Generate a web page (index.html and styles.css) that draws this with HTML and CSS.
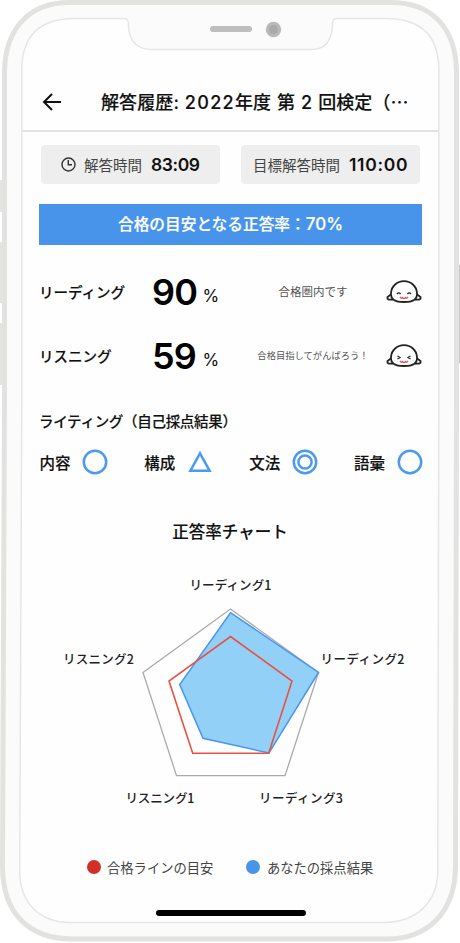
FILE: index.html
```html
<!DOCTYPE html>
<html lang="ja">
<head>
<meta charset="utf-8">
<title>解答履歴</title>
<link rel="stylesheet" href="styles.css">
</head>
<body>
<main class="phone">
  <svg class="frame" viewBox="0 0 460 943" aria-hidden="true">
    <path class="button" d="M0 180H5V212H0ZM0 242H5V303H0ZM0 323H5V385H0Z"/>
    <path class="button-right" d="M456 265H460V363H456Z"/>
    <path class="shell" d="M69 2.5H391C431 2.5 456 27 456.500 72V400L455.500 867C455 913 427 939 387 939H73C29 939 3 914 2.500 867L4.500 400V72C5 27 31 2.500 69 2.500Z"/>
    <path class="screen-edge" d="M74 18.500H124Q128 18.500 128.500 23V28Q131 49.500 152 49.500H311Q331 49.500 332.500 26V23Q333 18.500 337 18.500H386Q438 19 438.800 68V400L437.800 871C437.500 902 417 922.500 383 922.500H70C39 922.500 20 902 19.700 872L21.800 400V68Q23 19 74 18.500Z"/>
    <rect x="210" y="26" width="42" height="6" rx="3" fill="#bebebe"/>
    <circle cx="273.500" cy="29.500" r="7.700" fill="#b9b9b9"/>
    <circle cx="273.500" cy="29.500" r="4.500" fill="#aaa"/>
  </svg>
  <div class="app">
    <header class="header">
      <svg class="back" viewBox="0 0 20 20"><path d="M10 2L2 10L10 18M2 10H19"/></svg>
      <h1 class="title">解答履歴: <span class="title-year">2022</span>年度 第 2 回検定（<span class="dots">⋯</span></h1>
    </header>
    <section class="times">
      <div class="time"><svg class="clock" viewBox="0 0 15 15"><circle cx="7.500" cy="7.500" r="6.500"/><path d="M7.300 3V7.800H11"/></svg><span class="time-label">解答時間</span><b class="time-value">83:09</b></div>
      <div class="time time-goal"><span class="time-label">目標解答時間</span><b class="time-value time-value-goal">110:00</b></div>
    </section>
    <div class="banner"><span>合格の目安となる正答率：<span class="banner-rate">70%</span></span></div>
    <section class="scores">
      <div class="score"><span class="skill">リーディング</span><span class="number">90</span><span class="percent">%</span><span class="comment">合格圏内です</span>
        <svg class="face" viewBox="0 0 36 24"><path class="body" d="M5.500 14L1.500 17Q0.500 20.500 7 19.500M30.500 14L34.500 17Q35.500 20.500 29 19.500"/><path class="body" d="M5 13C5.500 6 11 1.200 18 1.200S30.500 6 31 13C31.500 19.500 27 22 18 22S4.500 19.500 5 13Z"/><path class="eye" d="M11 14Q12.800 11.800 14.600 14M21.400 14Q23.200 11.800 25 14"/><path class="mouth" d="M14 16.800Q15 19 16.200 17.500Q18 19.500 19.800 17.500Q21 19 22 16.800"/></svg></div>
      <div class="score"><span class="skill">リスニング</span><span class="number">59</span><span class="percent">%</span><span class="comment comment-small">合格目指してがんばろう！</span>
        <svg class="face" viewBox="0 0 36 24"><path class="body" d="M5.500 14L1.500 17Q0.500 20.500 7 19.500M30.500 14L34.500 17Q35.500 20.500 29 19.500"/><path class="body" d="M5 13C5.500 6 11 1.200 18 1.200S30.500 6 31 13C31.500 19.500 27 22 18 22S4.500 19.500 5 13Z"/><path class="eye" d="M11.500 12L14 13.500L11.500 15M24.500 12L22 13.500L24.500 15"/><path class="mouth" d="M14 16.800Q15 19 16.200 17.500Q18 19.500 19.800 17.500Q21 19 22 16.800"/></svg></div>
    </section>
    <h2 class="writing">ライティング（自己採点結果）</h2>
    <section class="marks">
      <div class="mark"><span>内容</span><svg viewBox="0 0 26 26"><circle cx="13" cy="13" r="11.200"/></svg></div>
      <div class="mark"><span>構成</span><svg viewBox="0 0 26 26"><path d="M13 4.300L22.600 21.700H3.400Z"/></svg></div>
      <div class="mark"><span>文法</span><svg viewBox="0 0 26 26"><circle cx="13" cy="13" r="11.200"/><circle cx="13" cy="13" r="6.600"/></svg></div>
      <div class="mark"><span>語彙</span><svg viewBox="0 0 26 26"><circle cx="13" cy="13" r="11.200"/></svg></div>
    </section>
    <h2 class="chart-title">正答率チャート</h2>
    <svg class="chart" viewBox="0 0 416 260">
      <path class="axis" d="M208.500 49L296.500 112.500L263 215.700H154.500L121 112.500Z"/>
      <path class="result" d="M208.500 52.700L296.500 112.500L247 193L181 178.300L157.700 124.500Z"/>
      <path class="goal" d="M208.500 76.500L270 121L246.700 193.300H170.700L147 121Z"/>
      <text x="208.500" y="30" textLength="82">リーディング1</text>
      <text x="340.500" y="103.500" textLength="84">リーディング2</text>
      <text x="76.500" y="103.500" textLength="71">リスニング2</text>
      <text x="138" y="243" textLength="69">リスニング1</text>
      <text x="279" y="243" textLength="84">リーディング3</text>
    </svg>
    <section class="legend"><span class="legend-item"><i class="dot dot-goal"></i>合格ラインの目安</span><span class="legend-item"><i class="dot"></i>あなたの採点結果</span></section>
    <div class="home"></div>
  </div>
</main>
</body>
</html>
```
FILE: styles.css
```css
* { box-sizing: border-box; }
body { margin: 0; background: #fff; color: #111; font-family: "Noto Sans CJK JP", sans-serif; overflow: hidden; }
.phone { position: relative; width: 460px; height: 943px; }
.frame { position: absolute; inset: 0; width: 460px; height: 943px; }
.button { fill: #e3e3e2; }
.button-right { fill: #c8c8c8; }
.shell { fill: #fbfbfb; stroke: #e2e2e0; stroke-width: 5; }
.screen-edge { fill: #fefefe; stroke: #e6e6e6; stroke-width: 1.5; }
.app { position: relative; height: 943px; padding: 74px 22px 0; display: flex; flex-direction: column; }
.header { height: 58px; flex: none; display: flex; align-items: center; padding-left: 20px; border-bottom: 2px solid #e3e3e3; }
.back { width: 20px; height: 20px; flex: none; fill: none; stroke: #111; stroke-width: 2; }
.title { margin: 0 0 0 39px; font-size: 18px; font-weight: 500; line-height: 28px; white-space: nowrap; letter-spacing: 0.1px; word-spacing: 1px; }
.title-year { letter-spacing: 1.300px; }
.title, .time-value, .number, .banner-rate { font-family: Inter, "Noto Sans CJK JP", sans-serif; }
.dots { font-family: "Noto Sans CJK JP", sans-serif; }
.title, .skill, .writing, .mark, .chart-title { -webkit-text-stroke: 0.15px currentColor; }
.times { display: flex; justify-content: space-between; margin: 13px 18px 0 19px; }
.time { width: 179px; height: 39px; border-radius: 4px; background: #eee; display: flex; align-items: center; padding-left: 20px; white-space: nowrap; }
.time-goal { padding-left: 12px; }
.clock { width: 15px; height: 15px; margin-right: 8px; fill: none; stroke: #333; stroke-width: 1.4; }
.time-label { font-size: 14.500px; color: #444; }
.time-value { margin-left: 9px; font-size: 17.500px; font-weight: 600; line-height: 24px; letter-spacing: -0.400px; }
.time-value-goal { letter-spacing: 0.700px; }
.banner { height: 41px; margin: 20px 16px 0 17px; padding-bottom: 1px; background: #4894ea; color: #fff; font-size: 15.700px; font-weight: 500; line-height: 24px; display: flex; align-items: center; justify-content: center; white-space: nowrap; -webkit-text-stroke: 0.2px #fff; }
.banner-rate { font-size: 17px; font-weight: 500; }
.scores { margin-top: 15px; }
.score { height: 64px; display: grid; grid-template-columns: 113px 51px 35px 150px 36px; align-items: center; padding-left: 17px; white-space: nowrap; }
.skill, .comment { padding-bottom: 2px; }
.skill { font-size: 14.500px; font-weight: 500; }
.number { font-size: 36px; font-weight: 600; line-height: 44px; color: #000; letter-spacing: -0.900px; }
.percent { font-family: Inter, sans-serif; font-size: 17px; padding-top: 8px; margin-left: -0.500px; }
.comment { font-size: 11.500px; color: #555; text-align: center; }
.comment-small { font-size: 9.300px; }
.face { width: 36px; height: 24px; margin-left: -2px; fill: none; }
.body { stroke: #222; stroke-width: 1.800; fill: #fff; }
.eye { stroke: #222; stroke-width: 1.300; }
.mouth { stroke: #e44; stroke-width: 1.200; }
.writing { margin: 21px 0 0 17px; font-size: 14.500px; font-weight: 500; line-height: 24px; white-space: nowrap; letter-spacing: -0.300px; }
.marks { display: flex; justify-content: space-between; margin: 16px 15.500px 0 17.500px; }
.mark { display: flex; align-items: center; height: 26px; gap: 11.500px; font-size: 15.500px; font-weight: 500; }
.mark svg { width: 26px; height: 26px; fill: none; stroke: #4c99f1; stroke-width: 2.500; }
.chart-title { margin: 42px 0 0; text-align: center; font-size: 16.500px; line-height: 28px; font-weight: 500; }
.chart { flex: none; display: block; width: 416px; height: 260px; margin-top: 15px; overflow: visible; }
.chart text { font-size: 12.500px; font-weight: 500; fill: #222; text-anchor: middle; }
.axis { fill: none; stroke: #aaa; stroke-width: 1.300; }
.result { fill: #93d0f7; stroke: #4996ee; stroke-width: 1.500; }
.goal { fill: none; stroke: #e85240; stroke-width: 1.600; }
.legend { display: flex; gap: 33px; margin: 37px 0 0 64.500px; white-space: nowrap; }
.legend-item { display: flex; align-items: center; gap: 6.500px; height: 20px; font-size: 13.300px; color: #444; }
.dot { width: 14px; height: 14px; border-radius: 50%; background: #4894ea; }
.dot-goal { background: #d32f29; }
.home { width: 150px; height: 6px; border-radius: 3px; background: #000; margin: 33px 0 0 134px; }
```
